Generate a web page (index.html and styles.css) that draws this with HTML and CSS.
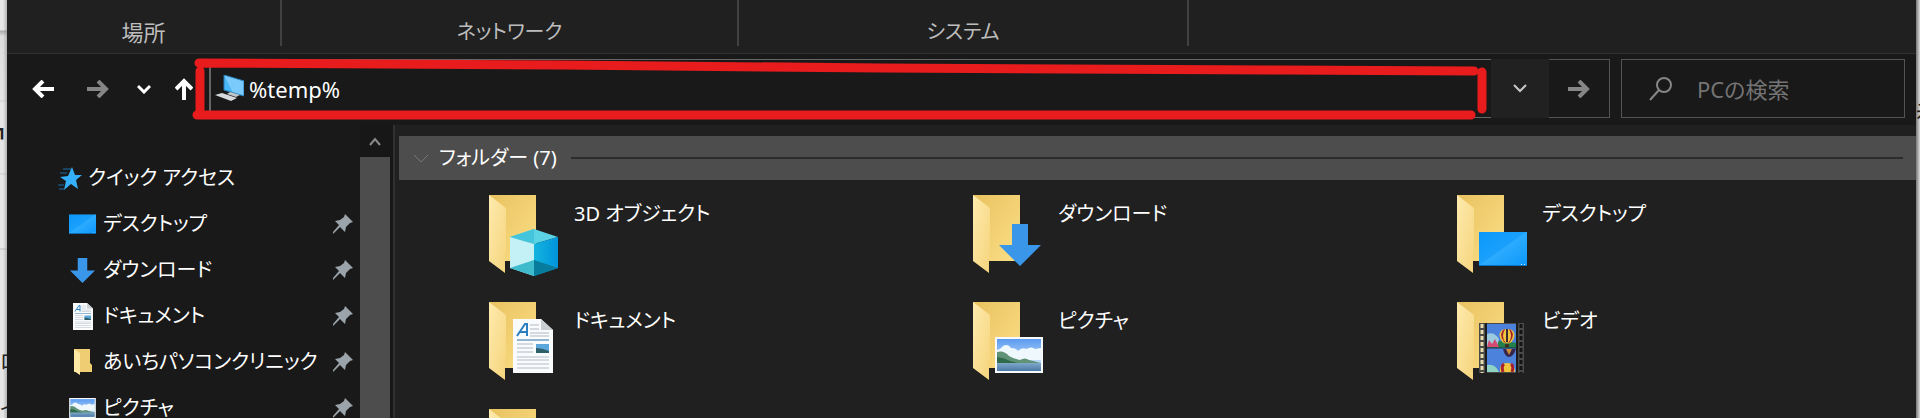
FILE: index.html
```
<!DOCTYPE html>
<html lang="ja">
<head>
  <meta charset="UTF-8">
  <meta name="viewport" content="width=device-width, initial-scale=1.0">
  <title>PC</title>
  <link rel="stylesheet" href="styles.css">
</head>
<body>
  <!-- shared icon shapes -->
  <svg class="defs" aria-hidden="true">
    <defs>
      <linearGradient id="gBack" x1="0" y1="0" x2="1" y2="1">
        <stop offset="0" stop-color="#e9c260"/><stop offset="1" stop-color="#fbdf86"/>
      </linearGradient>
      <linearGradient id="gFront" x1="0" y1="0" x2="1" y2="1">
        <stop offset="0" stop-color="#ffebae"/><stop offset="1" stop-color="#f5d47c"/>
      </linearGradient>
      <linearGradient id="gBlue" x1="0" y1="0" x2="1" y2="1">
        <stop offset="0" stop-color="#0a98fa"/><stop offset=".48" stop-color="#1aa0fc"/>
        <stop offset=".5" stop-color="#2cabff"/><stop offset="1" stop-color="#0c98fb"/>
      </linearGradient>
      <linearGradient id="gSky" x1="0" y1="0" x2="0" y2="1">
        <stop offset="0" stop-color="#5b9bf0"/><stop offset="1" stop-color="#e4f3fc"/>
      </linearGradient>
      <linearGradient id="gSea" x1="0" y1="0" x2="0" y2="1">
        <stop offset="0" stop-color="#7fa9c9"/><stop offset="1" stop-color="#4a78a8"/>
      </linearGradient>
      <linearGradient id="gCube" x1="0" y1="0" x2="1" y2="0">
        <stop offset="0" stop-color="#14b4de"/><stop offset="1" stop-color="#0093dc"/>
      </linearGradient>
      <symbol id="folder" viewBox="0 0 48 80">
        <path d="M0 0h47v66H0z" fill="url(#gBack)"/>
        <path d="M0 0l17 13v43l-1 3v19L0 66z" fill="url(#gFront)"/>
      </symbol>
      <symbol id="desktop" viewBox="0 0 48 34">
        <path d="M0 0h48v34H0z" fill="url(#gBlue)"/>
        <path d="M0 33h48v1H0z" fill="#0673c4"/>
        <path d="M42 32h1v1h-1zM45 32h1v1h-1z" fill="#cfe9ff"/>
      </symbol>
      <symbol id="down" viewBox="0 0 42 42">
        <path d="M13 0h16v21h13L21 42 0 21h13z" fill="#3a96e8"/>
      </symbol>
      <symbol id="picture" viewBox="0 0 48 36">
        <path d="M0 0h48v36H0z" fill="#f7f9fa"/>
        <path d="M2 2h44v32H2z" fill="url(#gSky)"/>
        <path d="M2 13q4-1 6-4 5-3 8 2 5 0 7 3 4-4 8-2 6-3 9 0l6-1v12H2z" fill="#eff8fd"/>
        <path d="M2 15q7-2 12 4 5 3 11 4 5-3 9 0l12 3v2H2z" fill="#5f9276"/>
        <path d="M2 20q8 1 13 4l12 3H2z" fill="#2f6a4a"/>
        <path d="M2 26h44v8H2z" fill="url(#gSea)"/>
      </symbol>
      <symbol id="document" viewBox="0 0 40 54">
        <path d="M0 0h28l12 11v43H0z" fill="#fafbfc"/>
        <path d="M28 0l12 11H28z" fill="#c9ced2"/>
        <path d="M4 17L12 5h2v12M7 13h7" fill="none" stroke="#2b7fc0" stroke-width="2"/>
        <path d="M17 6h9M17 10h9M17 14h19M17 17h19M4 25h16M4 29h16M4 33h16" stroke="#aeb9c4"/>
        <path d="M4 21h32" stroke="#2b6fa8"/>
        <path d="M4 38h32M4 41h32M4 45h32M4 49h32" stroke="#b3bcc6"/>
        <path d="M23 25h13v9H23z" fill="#5ba7dc"/><path d="M23 29q6 0 13 3v2H23z" fill="#2c5f68"/>
      </symbol>
      <symbol id="cube" viewBox="0 0 48 47">
        <path d="M24 0l24 8-24 7L0 8z" fill="#5cd3e4"/>
        <path d="M0 8l24 7v32L0 39z" fill="#c4f1f5"/>
        <path d="M24 15l24-7v31l-24 8z" fill="url(#gCube)"/>
        <path d="M0 39l24-8v16z" fill="#3fbccb"/>
        <path d="M24 31l24 8-24 8z" fill="#087c9c"/>
        <path d="M24 0v15L0 8z" fill="#45c5dc"/>
      </symbol>
      <symbol id="balloon" viewBox="0 0 16 20">
        <path d="M8 0c11 0 9 11 3 15H5C-1 11-3 0 8 0z" fill="#f0c63e"/>
        <path d="M4 1q-5 5 1 13l2 1Q1 8 6 0zM12 1q5 5-1 13l-2 1q6-7 1-15z" fill="#a8202c"/>
        <path d="M7 0h2v14H7z" fill="#332035"/><path d="M6 16h4v3H6z" fill="#3b2a1c"/>
      </symbol>
      <symbol id="film" viewBox="0 0 45 50">
        <path d="M0 0h45v50H0z" fill="#4a4a48"/>
        <path d="M6 0h2v50H6zM37 0h2v50h-2z" fill="#1c1c1c"/>
        <path d="M8 1h29v48H8z" fill="#4c82dc"/>
        <path d="M8 20q15-4 29 0v5H8z" fill="#24804a"/>
        <path d="M8 11q7-3 12 5l-2 8H8z" fill="#9ccbe0"/>
        <path d="M8 24l2-7 3 4 3-5 4 8z" fill="#d44a72"/>
        <path d="M8 42q8-2 12 7H8z" fill="#8fd3c4"/>
        <path d="M8 25h29" stroke="#1c2a48"/>
        <path d="M24 26h13q-3 8-7 8t-6-8z" fill="#38264a"/><path d="M27 26h6l-3 6z" fill="#cc8a3a"/>
        <use href="#balloon" x="20" y="6" width="16" height="19"/>
        <path d="M21 49q-1-9 7-9t8 9z" fill="#f0c63e"/><path d="M24 49q-2-6 1-8M33 49q2-6-1-8" stroke="#a8202c" stroke-width="3" fill="none"/>
        <path d="M3 1v49" stroke="#e8dcae" stroke-width="3" stroke-dasharray="4 2"/>
        <path d="M42 1v49" stroke="#141414" stroke-width="3" stroke-dasharray="4 2"/>
      </symbol>
      <symbol id="pin" viewBox="0 0 20 20">
        <path d="M12 0l8 8-3 1-4 4-1 5-5-5-6 6-1 1v-2l6-7-4-4 5-1 4-3z" fill="#9ba4aa"/>
      </symbol>
      <symbol id="arrow" viewBox="0 0 22 18">
        <path d="M0 9h19M11 1l8 8-8 8" fill="none" stroke="currentColor" stroke-width="4"/>
      </symbol>
    </defs>
  </svg>

  <div class="desk">
    <div class="behind behind-left" aria-hidden="true">
      <span class="bit bit-corner">┓</span>
      <span class="bit bit-box">ロ</span>
      <span class="bit bit-end">イ</span>
    </div>

    <main class="window">
      <div class="ribbon">
        <div class="ribbon-group places">場所</div>
        <div class="ribbon-group network">ネットワーク</div>
        <div class="ribbon-group system">システム</div>
      </div>

      <div class="toolbar">
        <button class="nav-btn back" aria-label="戻る"><svg class="arrow left"><use href="#arrow"/></svg></button>
        <button class="nav-btn forward" aria-label="進む"><svg class="arrow"><use href="#arrow"/></svg></button>
        <button class="nav-btn recent" aria-label="最近表示した場所">
          <svg width="14" height="10" viewBox="0 0 14 10"><path d="M1 2l6 6 6-6" fill="none" stroke="currentColor" stroke-width="3"/></svg>
        </button>
        <button class="nav-btn up" aria-label="上へ"><svg class="arrow upward"><use href="#arrow"/></svg></button>

        <div class="address">
          <svg class="pc-icon" viewBox="0 0 29 27">
            <path d="M9 0l20 6v15L9 15z" fill="#49b6f7"/>
            <path d="M9 0l20 6v15L18 18z" fill="#7acbfb"/>
            <path d="M9 0l20 6v15L9 15z" fill="none" stroke="#267fb8"/>
            <path d="M0 20l7-2 15 5-6 3z" fill="#d7dadd"/><path d="M15 17l10 3-4 2-9-3z" fill="#bfc6cb"/>
          </svg>
          <input type="text" class="address-input" value="%temp%" aria-label="アドレス">
          <!-- hand drawn marker around the address -->
          <svg class="marker" viewBox="0 0 1296 62" preserveAspectRatio="none">
            <path d="M7 5L370 7 690 10 1090 12 1282 13M8 13V52M5 57H1279M1290 14V51" fill="none" stroke="#e81b1d" stroke-width="9" stroke-linecap="round" stroke-linejoin="round"/>
          </svg>
        </div>
        <button class="drop" aria-label="履歴">
          <svg width="14" height="9" viewBox="0 0 14 9"><path d="M1 1l6 6 6-6" fill="none" stroke="currentColor" stroke-width="2"/></svg>
        </button>
        <button class="go" aria-label="移動"><svg class="arrow"><use href="#arrow"/></svg></button>
        <label class="search">
          <svg width="24" height="24" viewBox="0 0 24 24"><path d="M1 23l9-10" fill="none" stroke="currentColor" stroke-width="2"/><circle cx="15" cy="8" r="7" fill="none" stroke="currentColor" stroke-width="2"/></svg>
          <input type="text" class="search-input" placeholder="PCの検索" aria-label="PCの検索">
        </label>
      </div>

      <div class="panes">
        <nav class="sidebar">
          <a class="quick" href="#">
            <svg width="24" height="23" viewBox="0 0 24 23"><path d="M14 0l3 8 7 0-6 5 2 9-7-5-7 6 2-9-6-4 8-1z" fill="#35b0fa"/><path d="M5 2h8M2 6h7M0 18h6M1 22h5" stroke="#1b6ea8"/></svg>
            クイック アクセス
          </a>
          <a class="item" href="#"><span class="slot"><svg width="27" height="20"><use href="#desktop"/></svg></span>デスクトップ<svg class="pin"><use href="#pin"/></svg></a>
          <a class="item" href="#"><span class="slot"><svg width="25" height="25"><use href="#down"/></svg></span>ダウンロード<svg class="pin"><use href="#pin"/></svg></a>
          <a class="item" href="#"><span class="slot"><svg width="20" height="27"><use href="#document"/></svg></span>ドキュメント<svg class="pin"><use href="#pin"/></svg></a>
          <a class="item" href="#"><span class="slot"><svg width="18" height="26" viewBox="0 0 18 26"><path d="M0 0h16v14l2 2v7H0z" fill="#efce73"/><path d="M0 0l6 4v22l-6-4z" fill="#ffe9a5"/></svg></span>あいちパソコンクリニック<svg class="pin"><use href="#pin"/></svg></a>
          <a class="item" href="#"><span class="slot"><svg width="27" height="20"><use href="#picture"/></svg></span>ピクチャ<svg class="pin"><use href="#pin"/></svg></a>
        </nav>
        <div class="scrollbar">
          <button class="scroll-up" aria-label="上へスクロール"><svg width="12" height="9" viewBox="0 0 12 9"><path d="M1 8l5-6 5 6" fill="none" stroke="currentColor" stroke-width="2"/></svg></button>
          <div class="thumb"></div>
        </div>

        <section class="content">
          <h2 class="group-head">
            <svg width="16" height="9" viewBox="0 0 16 9"><path d="M1 1l7 7 7-7" fill="none" stroke="currentColor"/></svg>
            フォルダー (7)
          </h2>
          <div class="folders">
            <a class="folder" href="#"><span class="icon"><svg class="base"><use href="#folder"/></svg><svg class="over cube"><use href="#cube"/></svg></span><span class="name">3D オブジェクト</span></a>
            <a class="folder" href="#"><span class="icon"><svg class="base"><use href="#folder"/></svg><svg class="over down"><use href="#down"/></svg></span><span class="name">ダウンロード</span></a>
            <a class="folder" href="#"><span class="icon"><svg class="base"><use href="#folder"/></svg><svg class="over desktop"><use href="#desktop"/></svg></span><span class="name">デスクトップ</span></a>
            <a class="folder" href="#"><span class="icon"><svg class="base"><use href="#folder"/></svg><svg class="over document"><use href="#document"/></svg></span><span class="name">ドキュメント</span></a>
            <a class="folder" href="#"><span class="icon"><svg class="base"><use href="#folder"/></svg><svg class="over picture"><use href="#picture"/></svg></span><span class="name">ピクチャ</span></a>
            <a class="folder" href="#"><span class="icon"><svg class="base"><use href="#folder"/></svg><svg class="over film"><use href="#film"/></svg></span><span class="name">ビデオ</span></a>
            <a class="folder" href="#"><span class="icon"><svg class="base"><use href="#folder"/></svg></span><span class="name">ミュージック</span></a>
          </div>
        </section>
      </div>
    </main>

    <div class="behind behind-right" aria-hidden="true">
      <span class="bit bit-side">糸</span>
    </div>
  </div>
</body>
</html>
```
FILE: styles.css
```
:root {
  --dark: #191919;
  --panel: #202020;
  --line: #535353;
  --text: #fff;
}

* {
  box-sizing: border-box;
}

body {
  margin: 0;
  overflow: hidden;
  background: var(--panel);
  color: var(--text);
  font-family: "Noto Sans", "Noto Sans CJK JP", sans-serif;
  font-size: 20px;
  line-height: 30px;
  font-feature-settings: "palt";
}

a {
  color: inherit;
  text-decoration: none;
}

button,
input {
  padding: 0;
  border: none;
  background: none;
  color: inherit;
  font: inherit;
  font-feature-settings: inherit;
}

svg {
  display: block;
  flex: none;
}

.defs {
  position: absolute;
  width: 0;
  height: 0;
}

.desk {
  display: flex;
  height: 100vh;
}

/* slivers of the page behind the window */
.behind {
  flex: none;
  position: relative;
  overflow: hidden;
  background: #e6e6e6;
  color: #222;
}

.behind-left {
  width: 7px;
  background: linear-gradient(to right, transparent 3px, #8888), linear-gradient(#e6e6e6 30px, #aaa 31px, #ddd 36px, #e6e6e6 100px, #ccc 101px, #e6e6e6 102px, #e6e6e6 173px, #ccc 174px, #e6e6e6 175px, #e6e6e6 248px, #bbb 249px, #e6e6e6 250px);
}

.behind-right {
  width: 4px;
  background: linear-gradient(to right, #777, #ddd);
}

.bit {
  position: absolute;
  left: 0;
}

.bit-corner {
  top: 115px;
  left: -8px;
}

.bit-box {
  top: 347px;
}

.bit-end {
  top: 394px;
}

.bit-side {
  top: 96px;
}

.window {
  flex: 1;
  min-width: 0;
  display: flex;
  flex-direction: column;
  background: var(--panel);
}

.ribbon {
  flex: none;
  display: flex;
  height: 54px;
  border-bottom: 1px solid #303030;
  color: #bdbdbd;
}

.ribbon-group {
  height: 46px;
  padding-top: 17px;
  border-right: 2px solid #414141;
  text-align: center;
}

.places {
  width: 275px;
  font-size: 22px;
}

.network {
  width: 457px;
}

.system {
  width: 450px;
}

.toolbar {
  flex: none;
  display: flex;
  align-items: center;
  height: 71px;
  padding: 4px 11px 6px 25px;
  background: var(--dark);
}

.nav-btn {
  display: flex;
  justify-content: center;
  width: 22px;
}

.arrow {
  width: 22px;
  height: 18px;
}

.left {
  transform: rotate(180deg);
}

.upward {
  transform: rotate(-90deg);
}

.forward {
  margin-left: 33px;
  color: #858585;
}

.recent {
  margin-left: 24px;
}

.up {
  margin-left: 18px;
}

.address {
  position: relative;
  flex: 1;
  display: flex;
  align-items: center;
  height: 59px;
  margin-left: 14px;
  padding-left: 4px;
  border: 1px solid #666;
  border-width: 1px 0 1px 2px;
}

.pc-icon {
  width: 29px;
  height: 27px;
}

.address-input {
  flex: 1;
  min-width: 0;
  margin-left: 5px;
  font-size: 22px;
  outline: none;
}

.marker {
  position: absolute;
  left: -19px;
  top: -2px;
  width: calc(100% + 16px);
  height: 62px;
  pointer-events: none;
}

.drop {
  display: flex;
  align-items: center;
  justify-content: center;
  width: 58px;
  height: 59px;
  background: #212121;
  color: #c8c8c8;
}

.go {
  display: flex;
  align-items: center;
  justify-content: center;
  width: 61px;
  height: 59px;
  border: 1px solid var(--line);
  border-left: none;
  color: #868686;
}

.search {
  display: flex;
  align-items: center;
  width: 284px;
  height: 59px;
  margin-left: 11px;
  padding-left: 27px;
  border: 1px solid var(--line);
  color: #868686;
}

.search-input {
  flex: 1;
  min-width: 0;
  margin-left: 24px;
  font-size: 22px;
  outline: none;
}

.search-input::placeholder {
  color: #747474;
}

.panes {
  flex: 1;
  min-height: 0;
  display: flex;
  overflow: hidden;
}

.sidebar {
  flex: none;
  width: 353px;
  padding: 30px 7px 0 51px;
  background: var(--dark);
}

.quick,
.item {
  display: flex;
  align-items: center;
  height: 46px;
  white-space: nowrap;
}

.quick {
  gap: 6px;
}

.item {
  padding-left: 11px;
}

.slot {
  display: flex;
  justify-content: center;
  width: 27px;
  margin-right: 7px;
}

.pin {
  width: 20px;
  height: 20px;
  margin-left: auto;
}

.scrollbar {
  flex: none;
  display: flex;
  flex-direction: column;
  width: 33px;
  padding-right: 3px;
  background: #171717;
}

.scroll-up {
  display: flex;
  align-items: center;
  justify-content: center;
  height: 32px;
  color: #8a8a8a;
}

.thumb {
  flex: 1;
  background: #4d4d4d;
}

.content {
  flex: 1;
  min-width: 0;
  padding-top: 11px;
  border-left: 2px solid #303030;
}

.group-head {
  display: flex;
  align-items: center;
  gap: 10px;
  height: 44px;
  margin: 0 0 0 4px;
  padding: 0 13px 0 14px;
  background: #4d4d4d;
  font-size: 20px;
  font-weight: normal;
}

.group-head svg {
  color: #777;
}

.group-head::after {
  content: "";
  flex: 1;
  height: 2px;
  margin-left: 4px;
  background: #2c2c2c;
}

.folders {
  display: grid;
  grid-template-columns: repeat(3, 484px);
  grid-auto-rows: 107px;
  padding: 15px 0 0 94px;
}

.folder {
  display: flex;
  align-items: flex-start;
}

.icon {
  position: relative;
  width: 71px;
  height: 82px;
  margin-right: 14px;
}

.name {
  padding-top: 4px;
}

.base {
  width: 48px;
  height: 80px;
}

.over {
  position: absolute;
}

.over.cube {
  left: 21px;
  top: 34px;
  width: 48px;
  height: 47px;
}

.over.down {
  left: 26px;
  top: 29px;
  width: 42px;
  height: 42px;
}

.over.desktop {
  left: 22px;
  top: 37px;
  width: 48px;
  height: 34px;
}

.over.document {
  left: 24px;
  top: 17px;
  width: 40px;
  height: 54px;
}

.over.picture {
  left: 22px;
  top: 35px;
  width: 48px;
  height: 36px;
}

.over.film {
  left: 22px;
  top: 21px;
  width: 45px;
  height: 50px;
}
```
